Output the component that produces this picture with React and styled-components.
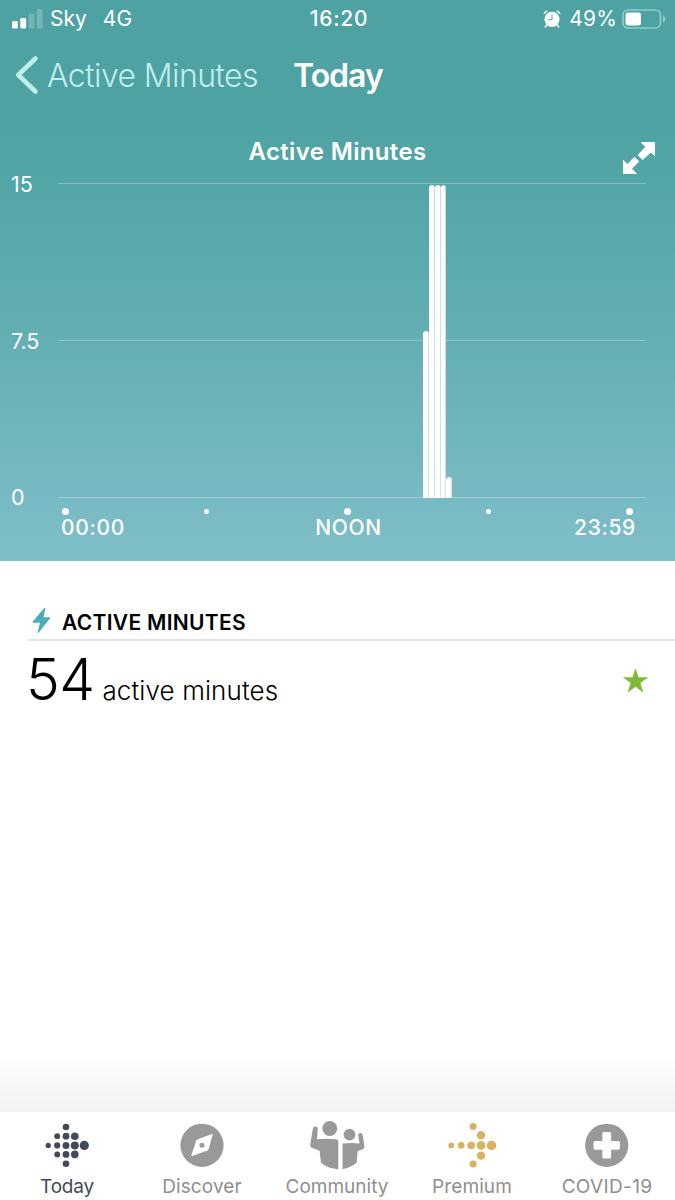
import React from 'react'
import styled, { createGlobalStyle } from 'styled-components'

const GlobalStyle = createGlobalStyle`
* { box-sizing: border-box; }
body {
  margin: 0;
  background: #fff;
  font-family: Inter, "Liberation Sans", sans-serif;
}
svg { display: block; }
`

const Screen = styled.div`
width: 675px;
height: 1200px;
display: flex;
flex-direction: column;
overflow: hidden;
background: #fff;
`

const Hero = styled.header`
height: 561px;
flex: none;
color: #fff;
background: linear-gradient(#4ea2a1 0px, #4ea2a1 110px, #53a6a6 185px, #63afb3 340px, #78bac3 500px, #7ebec7 561px);
`

const StatusBar = styled.div`
height: 38px;
display: grid;
grid-template-columns: 1fr auto 1fr;
align-items: center;
padding: 0 9px 0 12px;
font-size: 21px;
line-height: 26px;
`

const StatusGroup = styled.div`
display: flex;
align-items: center;
justify-content: ${props => props.$end ? "flex-end" : "flex-start"};
`

const StatusText = styled.span`
font-weight: ${props => props.$weight || 400};
letter-spacing: ${props => props.$spacing || "0"};
margin-left: ${props => props.$left || "0"};
`

const NavBar = styled.nav`
height: 76px;
display: flex;
align-items: center;
padding: 0 15px 2px;
`

const Back = styled.div`
display: flex;
align-items: center;
color: #c0eeec;
font-size: 32px;
font-weight: 300;
letter-spacing: -0.6px;
gap: 9px;
width: 278px;
white-space: nowrap;
`

const NavTitle = styled.h1`
margin: 0;
font-size: 32px;
font-weight: 600;
letter-spacing: -1px;
`

const ChartHeader = styled.div`
height: 70px;
display: grid;
grid-template-columns: 1fr auto 1fr;
padding: 22px 19px 0 19px;
`

const ChartTitle = styled.h2`
grid-column: 2;
margin: 0;
font-size: 24px;
line-height: 32px;
font-weight: 600;
letter-spacing: 0.35px;
`

const Expand = styled.div`
justify-self: end;
padding-top: 5px;
`

const Chart = styled.div`
display: grid;
grid-template-columns: 47px 588px;
margin-top: -1px;
padding-left: 11px;
height: 315px;
`

const YAxis = styled.div`
display: flex;
flex-direction: column;
justify-content: space-between;
margin: -12px 0 -12px;
font-size: 21.5px;
line-height: 26px;
`

const Plot = styled.div`
display: grid;
`

const GridLines = styled.div`
grid-area: 1 / 1;
display: flex;
flex-direction: column;
justify-content: space-between;
`

const Line = styled.div`
height: 1px;
background: rgba(255, 255, 255, 0.28);
`

const Bars = styled.div`
grid-area: 1 / 1;
display: grid;
grid-template-columns: repeat(96, 5.95px);
align-items: end;
padding: 2px 0 0 2.5px;
`

const Bar = styled.div`
grid-row: 1;
border-right: 1px solid rgba(255, 255, 255, 0.65);
border-radius: 2.5px 2.5px 0 0;
background: #fff;
background-clip: padding-box;
`

const Ticks = styled.div`
display: flex;
justify-content: space-between;
align-items: center;
height: 8px;
margin: 9px 41px 0 61px;
`

const Tick = styled.i`
width: 9px;
display: flex;
justify-content: center;
&::after {
  content: "";
  width: ${props => props.$small ? 5 : 7}px;
  height: ${props => props.$small ? 5 : 7}px;
  border-radius: 50%;
  background: #fff;
}
`

const XAxis = styled.div`
display: grid;
grid-template-columns: 1fr auto 1fr;
margin: 0 39px 0 61px;
font-size: 21px;
line-height: 26px;
font-weight: 500;
letter-spacing: 0.65px;
span:last-child { text-align: right; }
`

const Details = styled.main`
flex: 1;
padding-left: 27px;
background: linear-gradient(#fff 0px, #fff 490px, #f2f2f4 551px);
`

const SectionHeader = styled.div`
height: 80px;
display: flex;
align-items: flex-end;
padding: 0 0 5px 5px;
border-bottom: 2px solid #e3e3e5;
`

const SectionTitle = styled.h3`
margin: 0 0 -3px 11px;
font-size: 21px;
line-height: 28px;
font-weight: 600;
letter-spacing: 0.3px;
color: #000;
`

const Summary = styled.div`
display: flex;
align-items: center;
justify-content: space-between;
height: 80px;
padding-right: 26px;
`

const Amount = styled.div`
display: flex;
align-items: baseline;
padding-top: 9px;
color: #000;
line-height: 64px;
`

const Value = styled.span`
margin-left: -1px;
font-size: 57px;
font-weight: 300;
letter-spacing: -0.6px;
`

const Unit = styled.span`
margin-left: 8px;
font-size: 26px;
font-weight: 300;
letter-spacing: 0.1px;
`

const TabBar = styled.footer`
height: 88px;
flex: none;
display: grid;
grid-template-columns: repeat(5, 1fr);
background: #fff;
`

const Tab = styled.div`
display: flex;
flex-direction: column;
align-items: center;
padding: 6px 1px 0 0;
color: ${props => props.$active ? "#434957" : "#8f8f8f"};
svg {
  height: 54px;
  margin-right: 1px;
}
`

const TabLabel = styled.span`
margin-top: 3px;
font-size: 19px;
line-height: 24px;
font-weight: 370;
letter-spacing: ${props => props.$spacing}px;
`

// minutes per quarter hour, slot counted from midnight
const activity = [
  { slot: 61, minutes: 8 },
  { slot: 62, minutes: 15 },
  { slot: 63, minutes: 15 },
  { slot: 64, minutes: 15 },
  { slot: 65, minutes: 1 },
]

const Signal = () => (
  <svg width="32" height="20" viewBox="0 0 32 20" fill="#fff">
    <rect x="0" y="12" width="5.8" height="7.5" rx="1.5" />
    <rect x="8.3" y="9" width="5.8" height="10.5" rx="1.5" />
    <rect x="16.6" y="4.5" width="5.8" height="15" rx="1.5" opacity=".22" />
    <rect x="24.8" y="0" width="5.8" height="19.5" rx="1.5" opacity=".22" />
  </svg>
)

const Alarm = () => (
  <svg width="18" height="18" viewBox="0 0 18 18">
    <path d="M.6 4.8C.5 1.8 2.4 .2 5.2 .8zM17.4 4.8C17.5 1.8 15.6 .2 12.8 .8z" fill="#fff" />
    <circle cx="9" cy="9.3" r="8.2" fill="#4ea2a1" />
    <circle cx="9" cy="9.3" r="7.6" fill="#fff" />
    <path d="M3.8 15l-1.3 1.7M14.2 15l1.3 1.7" stroke="#fff" strokeWidth="1.8" strokeLinecap="round" />
    <path d="M9 4.6v5.1H5" fill="none" stroke="#4ea2a1" strokeWidth="1" />
  </svg>
)

const Battery = () => (
  <svg width="44" height="20" viewBox="0 0 44 20">
    <rect x="1" y="1" width="37.5" height="18" rx="5" fill="none" stroke="#8ecbca" strokeWidth="1.7" />
    <rect x="3.5" y="3.5" width="15.5" height="13" rx="2.4" fill="#fff" />
    <path d="M41 6.4c3 1.2 3 6 0 7.2z" fill="#8ecbca" />
  </svg>
)

const ExpandArrows = () => (
  <svg width="34" height="34" viewBox="0 0 34 34" fill="#fff">
    <path d="M18.7 1H33v14.3l-4.2-3.8-8.2 7.5-5-5 7.6-7.9z" />
    <path d="M1 18.8l4.4 4.1 7.1-7.2 4.8 4.8-7.3 7.3 5.1 5.2H1z" />
  </svg>
)

const FitbitLogo = () => (
  <svg width="54" height="54" viewBox="0 0 54 54" fill="currentColor">
    <circle cx="26" cy="9" r="3.3" />
    <circle cx="17.2" cy="18.2" r="2.9" />
    <circle cx="26" cy="18.2" r="3.4" />
    <circle cx="34.8" cy="18.2" r="3.8" />
    <circle cx="8.2" cy="27.4" r="2.6" />
    <circle cx="17.2" cy="27.4" r="3.1" />
    <circle cx="26" cy="27.4" r="3.5" />
    <circle cx="34.8" cy="27.4" r="4" />
    <circle cx="44.3" cy="27.4" r="4.6" />
    <circle cx="17.2" cy="36.4" r="2.9" />
    <circle cx="26" cy="36.4" r="3.4" />
    <circle cx="34.8" cy="36.4" r="3.8" />
    <circle cx="26" cy="45.8" r="3.3" />
  </svg>
)

const Compass = () => (
  <svg width="54" height="54" viewBox="0 0 54 54">
    <circle cx="27" cy="27.3" r="21.6" fill="#999" />
    <path d="M37.5 17.2L33.6 30.9Q33.1 32.3 31.8 32.8L17.4 38Q16 38.4 16.4 37L21 23.2Q21.5 21.8 22.8 21.3L36.4 16.2Q37.8 15.8 37.5 17.2z" fill="#fff" />
    <circle cx="27" cy="27.3" r="2.5" fill="#999" />
  </svg>
)

const People = () => (
  <svg width="56" height="54" viewBox="0 0 56 54" fill="#999">
    <circle cx="20.8" cy="10.5" r="7.4" />
    <circle cx="40.5" cy="16.6" r="5.9" />
    <path d="M3.8 11Q4.2 8.4 6.5 8.6Q9 8.8 8.8 11.5L8 21.2Q18 20.3 27 21.2Q29.3 21.5 29.3 23.7V51.2Q18.4 50.4 12 44.8L10.6 32.8L2.8 29.8Q.9 28.8 1.2 26.7z" />
    <path d="M33.5 25.6Q42 24.5 50.5 25.4L49.2 17.6Q48.9 15.4 51 15.1Q53 14.8 53.7 17L55.4 28.5Q55.6 30.4 53.8 31.2L48.6 33.3L47.7 44.6Q42 50 33.5 51z" />
  </svg>
)

const PremiumDots = () => (
  <svg width="54" height="54" viewBox="0 0 54 54" fill="#dbb163">
    <circle cx="28.1" cy="8.6" r="3.5" />
    <circle cx="36" cy="17.2" r="4.2" />
    <circle cx="6.3" cy="27.4" r="2.9" />
    <circle cx="16.2" cy="27.4" r="3.3" />
    <circle cx="26.2" cy="27.4" r="3.8" />
    <circle cx="36" cy="27.4" r="4.3" />
    <circle cx="46.5" cy="27.4" r="4.7" />
    <circle cx="36" cy="37.6" r="4.2" />
    <circle cx="28.1" cy="46" r="3.5" />
  </svg>
)

const Medical = () => (
  <svg width="54" height="54" viewBox="0 0 54 54">
    <circle cx="26.7" cy="27.3" r="21.6" fill="#999" />
    <rect x="22.3" y="14.1" width="8.8" height="26.4" rx="1.6" fill="#fff" />
    <rect x="13.5" y="22.9" width="26.4" height="8.8" rx="1.6" fill="#fff" />
  </svg>
)

const tabs = [
  { label: 'Today', icon: <FitbitLogo />, spacing: -0.2, active: true },
  { label: 'Discover', icon: <Compass />, spacing: 0.1 },
  { label: 'Community', icon: <People />, spacing: 0 },
  { label: 'Premium', icon: <PremiumDots />, spacing: 0.1 },
  { label: 'COVID-19', icon: <Medical />, spacing: 0.35 },
]

const App = () => {
  return (
    <Screen>
      <GlobalStyle />
      <Hero>
        <StatusBar>
          <StatusGroup>
            <Signal />
            <StatusText $left="6px">Sky</StatusText>
            <StatusText $left="16px">4G</StatusText>
          </StatusGroup>
          <StatusText $weight={500} $spacing="0.7px">16:20</StatusText>
          <StatusGroup $end>
            <Alarm />
            <StatusText $left="8px" $spacing="0.2px">49%</StatusText>
            <StatusText $left="5px"><Battery /></StatusText>
          </StatusGroup>
        </StatusBar>
        <NavBar>
          <Back>
            <svg width="23" height="38" viewBox="0 0 23 38">
              <path d="M20.4 2.5L3.3 19L20.4 35.5" fill="none" stroke="currentColor" strokeWidth="4.6" strokeLinecap="round" strokeLinejoin="round" />
            </svg>
            Active Minutes
          </Back>
          <NavTitle>Today</NavTitle>
        </NavBar>
        <ChartHeader>
          <ChartTitle>Active Minutes</ChartTitle>
          <Expand><ExpandArrows /></Expand>
        </ChartHeader>
        <Chart>
          <YAxis>
            <span>15</span>
            <span>7.5</span>
            <span>0</span>
          </YAxis>
          <Plot>
            <GridLines>
              <Line />
              <Line />
              <Line />
            </GridLines>
            <Bars>
              {activity.map(({ slot, minutes }) => (
                <Bar key={slot} style={{ gridColumn: slot + 1, height: `${(minutes / 15) * 100}%` }} />
              ))}
            </Bars>
          </Plot>
        </Chart>
        <Ticks>
          <Tick />
          <Tick $small />
          <Tick />
          <Tick $small />
          <Tick />
        </Ticks>
        <XAxis>
          <span>00:00</span>
          <span>NOON</span>
          <span>23:59</span>
        </XAxis>
      </Hero>
      <Details>
        <SectionHeader>
          <svg width="19" height="27" viewBox="0 0 19 27" fill="#4dacb7">
            <path d="M12.2 1.1Q13.4 .4 13.2 1.8L11.5 10.3H17.6Q18.8 10.4 18 11.5L6.7 25.4Q5.5 26.4 5.7 24.9L8 15.8H1.2Q.2 15.6 .8 14.6z" />
          </svg>
          <SectionTitle>ACTIVE MINUTES</SectionTitle>
        </SectionHeader>
        <Summary>
          <Amount>
            <Value>54</Value>
            <Unit>active minutes</Unit>
          </Amount>
          <svg width="27" height="27" viewBox="0 0 27 27" fill="#7fba39">
            <path d="M13.5 0L16.5 9.2H26.2L18.4 15L21.4 24.7L13.5 18.8L5.6 24.7L8.6 15L.8 9.2H10.5z" />
          </svg>
        </Summary>
      </Details>
      <TabBar>
        {tabs.map(tab => (
          <Tab key={tab.label} $active={tab.active}>
            {tab.icon}
            <TabLabel $spacing={tab.spacing}>{tab.label}</TabLabel>
          </Tab>
        ))}
      </TabBar>
    </Screen>
  )
}

export default App
